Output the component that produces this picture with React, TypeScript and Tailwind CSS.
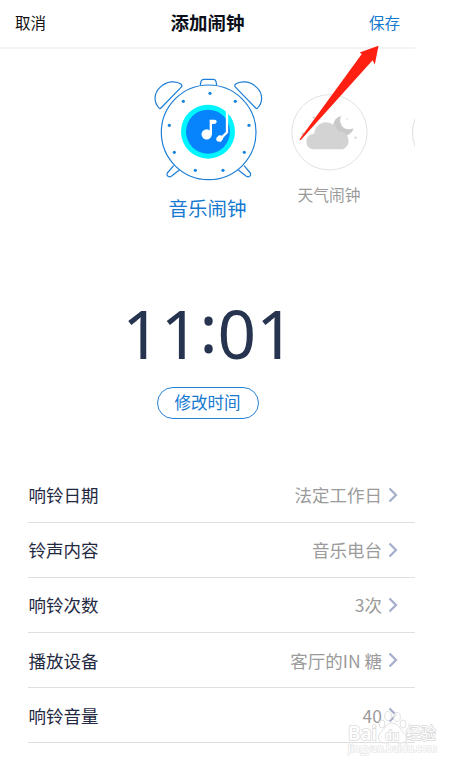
const clockDots = [
  [195, 70], [271, 94], [312, 166], [298, 247], [234, 301],
  [151, 301], [88, 247], [73, 166], [115, 94],
];

const settings = [
  { label: "响铃日期", value: "法定工作日" },
  { label: "铃声内容", value: "音乐电台" },
  { label: "响铃次数", value: "3次" },
  { label: "播放设备", value: "客厅的IN 糖" },
  { label: "响铃音量", value: "40" },
];

const MusicClock = () => (
  <svg viewBox="0 0 375 360" className="block h-[120px] w-[125px]" fill="none">
    <g stroke="#1c7ed6" strokeWidth="3.6" strokeLinejoin="round">
      <path d="M43 115 C26 98 25 71 45 52 C65 33 93 31 109 43 Q113 47 108 52 L48 114 Q45 117 43 115Z" />
      <path d="M337 115 C354 98 355 71 335 52 C315 33 287 31 271 43 Q267 47 272 52 L332 114 Q335 117 337 115Z" />
      <path d="M166 46 L168 34 Q169 28 176 28 H205 Q212 28 213 34 L215 46" />
      <path d="M86 287 L67 309 C63 317 72 324 79 319 L103 300" />
      <path d="M297 287 L316 309 C320 317 311 324 304 319 L280 300" />
      <circle cx="191" cy="187" r="142" />
    </g>
    {clockDots.map(([x, y]) => (
      <circle key={`${x}-${y}`} cx={x} cy={y} r="4.8" fill="#1683dc" />
    ))}
    <circle cx="189" cy="185" r="81" fill="#00f5ff" />
    <circle cx="189" cy="185" r="66" fill="#0784fb" />
    <circle cx="185" cy="193" r="15.5" fill="#fff" />
    <path d="M194 193 V149 H208 Q216 150 215 156 Q214 162 207 162 H201 V193Z" fill="#fff" />
    <path d="M246 119 V187 L230 203" stroke="#fff" strokeWidth="7" />
    <path d="M214 204 L222 196 Q229 194 235 200 Q236 208 228 215 Q219 217 214 211Z" fill="#fff" />
  </svg>
);

const WeatherIcon = () => (
  <svg viewBox="17 71 230 231" className="block h-[77px] w-[77px]" fill="none">
    <circle cx="132" cy="186" r="113" stroke="#e2e2e2" strokeWidth="3" />
    <path d="M167 137 C149 141 140 158 145 175 C151 194 171 201 187 194 C196 190 202 184 204 174 C190 179 176 177 169 166 C163 157 162 147 167 137Z" fill="#c9c9c9" />
    <path d="M84 237 C70 236 62 226 63 213 C63 199 73 191 86 190 C88 171 103 156 121 156 C139 156 152 167 158 184 C176 180 189 194 189 211 C189 226 180 236 165 237Z" fill="#d3d3d3" />
    <g fill="#d3d3d3">
      <circle cx="85" cy="141" r="3.5" />
      <circle cx="53" cy="191" r="5" />
      <circle cx="185" cy="146" r="2.2" />
      <circle cx="210" cy="202" r="3.5" />
    </g>
  </svg>
);

const Chevron = () => (
  <svg viewBox="0 0 10 16" className="ml-[6px] h-4 w-[10px]" fill="none" stroke="#a5aeca" strokeWidth="2.2">
    <path d="M1.5 1.5 L8 8 L1.5 14.5" />
  </svg>
);

const PointerArrow = () => (
  <svg viewBox="290 40 100 110" className="absolute left-[290px] top-[40px] h-[110px] w-[100px]">
    <path d="M299.6 139.2 L361.8 54 L359.6 52.6 L378.5 45.8 L374.8 64.4 L372.6 60.2 L301 139.8 Q300 140.5 299.6 139.2Z" fill="#ff2012" />
  </svg>
);

const Watermark = () => (
  <div className="absolute left-[347px] top-[710px] h-[46px] w-[96px] font-['Noto_Sans','Noto_Sans_CJK_SC',sans-serif]">
    <svg viewBox="0 0 96 46" className="block h-[46px] w-[96px]" fill="#fff" stroke="#dcdcdc" strokeWidth="0.9">
      <g fillOpacity="0.75">
        <ellipse cx="35" cy="14" rx="3" ry="4" />
        <ellipse cx="41" cy="6" rx="3.3" ry="4.5" />
        <ellipse cx="50" cy="7" rx="3.3" ry="4.5" />
        <ellipse cx="56" cy="14" rx="3" ry="4" />
        <path d="M45 13 C39 13 38 19 34 22 C29 27 32 34 39 33 C44 32 48 32 53 33 C60 34 62 27 57 23 C53 19 51 13 45 13Z" />
      </g>
      <g className="[paint-order:stroke]" strokeWidth="1.6" fontWeight="600">
        <text x="1" y="30" fontSize="19" textLength="29" lengthAdjust="spacingAndGlyphs">Bai</text>
        <text x="38" y="30" fontSize="12" textLength="14" lengthAdjust="spacingAndGlyphs">du</text>
        <text x="59" y="29" fontSize="15.5" fontWeight="400" textLength="30" lengthAdjust="spacingAndGlyphs">经验</text>
        <text x="1" y="42" fontSize="10" fontWeight="500" strokeWidth="1.2" stroke="#e4e4e4" textLength="89" lengthAdjust="spacingAndGlyphs">jingyan.baidu.com</text>
      </g>
    </svg>
  </div>
);

const App = () => {
  return (
    <div className="relative h-[765px] w-[465px] overflow-hidden bg-white font-['Noto_Sans_CJK_SC',sans-serif]">
      <main className="w-[415px]">
        {/* Header */}
        <header className="grid h-[49px] grid-cols-3 items-center border-b-2 border-[#f3f3f3] px-[15px] pb-[2px] text-[15.5px] leading-none text-[#111]">
          <button className="text-left">取消</button>
          <h1 className="text-center text-[18.5px] font-bold text-[#0b0f19]">添加闹钟</h1>
          <button className="text-right text-[#1479d0]">保存</button>
        </header>

        {/* Alarm types */}
        <section className="flex h-[201px] overflow-hidden pl-[145px] pt-[21px]">
          <div className="w-[125px] shrink-0 text-center text-[#1479d0]">
            <MusicClock />
            <p className="mt-2 text-[19.5px] leading-[20px]">音乐闹钟</p>
          </div>
          <div className="ml-[20.5px] mt-6 flex w-[77px] shrink-0 flex-col items-center text-[#9b9b9b]">
            <WeatherIcon />
            <p className="mt-4 text-[15.75px] leading-4">天气闹钟</p>
          </div>
          <div className="ml-[44.5px] mt-6 h-[77px] w-[77px] shrink-0 rounded-full border border-[#dedede]" />
        </section>

        {/* Time */}
        <section className="flex h-[217.5px] flex-col items-center">
          <div className="mt-[47px] h-[89.5px] pl-[2px] font-['Noto_Sans',sans-serif] text-[67.5px] leading-[72px] text-[#27344f]">
            11<span className="relative -top-[6px]">:</span>01
          </div>
          <button className="h-8 w-[102px] rounded-full border-[1.5px] border-[#2583d6] text-[16.5px] leading-none text-[#1479d0]">
            修改时间
          </button>
        </section>

        {/* Settings */}
        <section className="pl-7">
          {settings.map((item) => (
            <div key={item.label} className="flex h-[55.2px] items-center border-b border-[#dfdfdf] pr-[17px] text-[17.5px]">
              <span className="pl-[0.5px] pt-px text-[#1f2942]">{item.label}</span>
              <span className="ml-auto pt-px text-[#9b9b9b]">{item.value}</span>
              <Chevron />
            </div>
          ))}
        </section>
      </main>

      <PointerArrow />
      <Watermark />
    </div>
  );
};

export default App;
